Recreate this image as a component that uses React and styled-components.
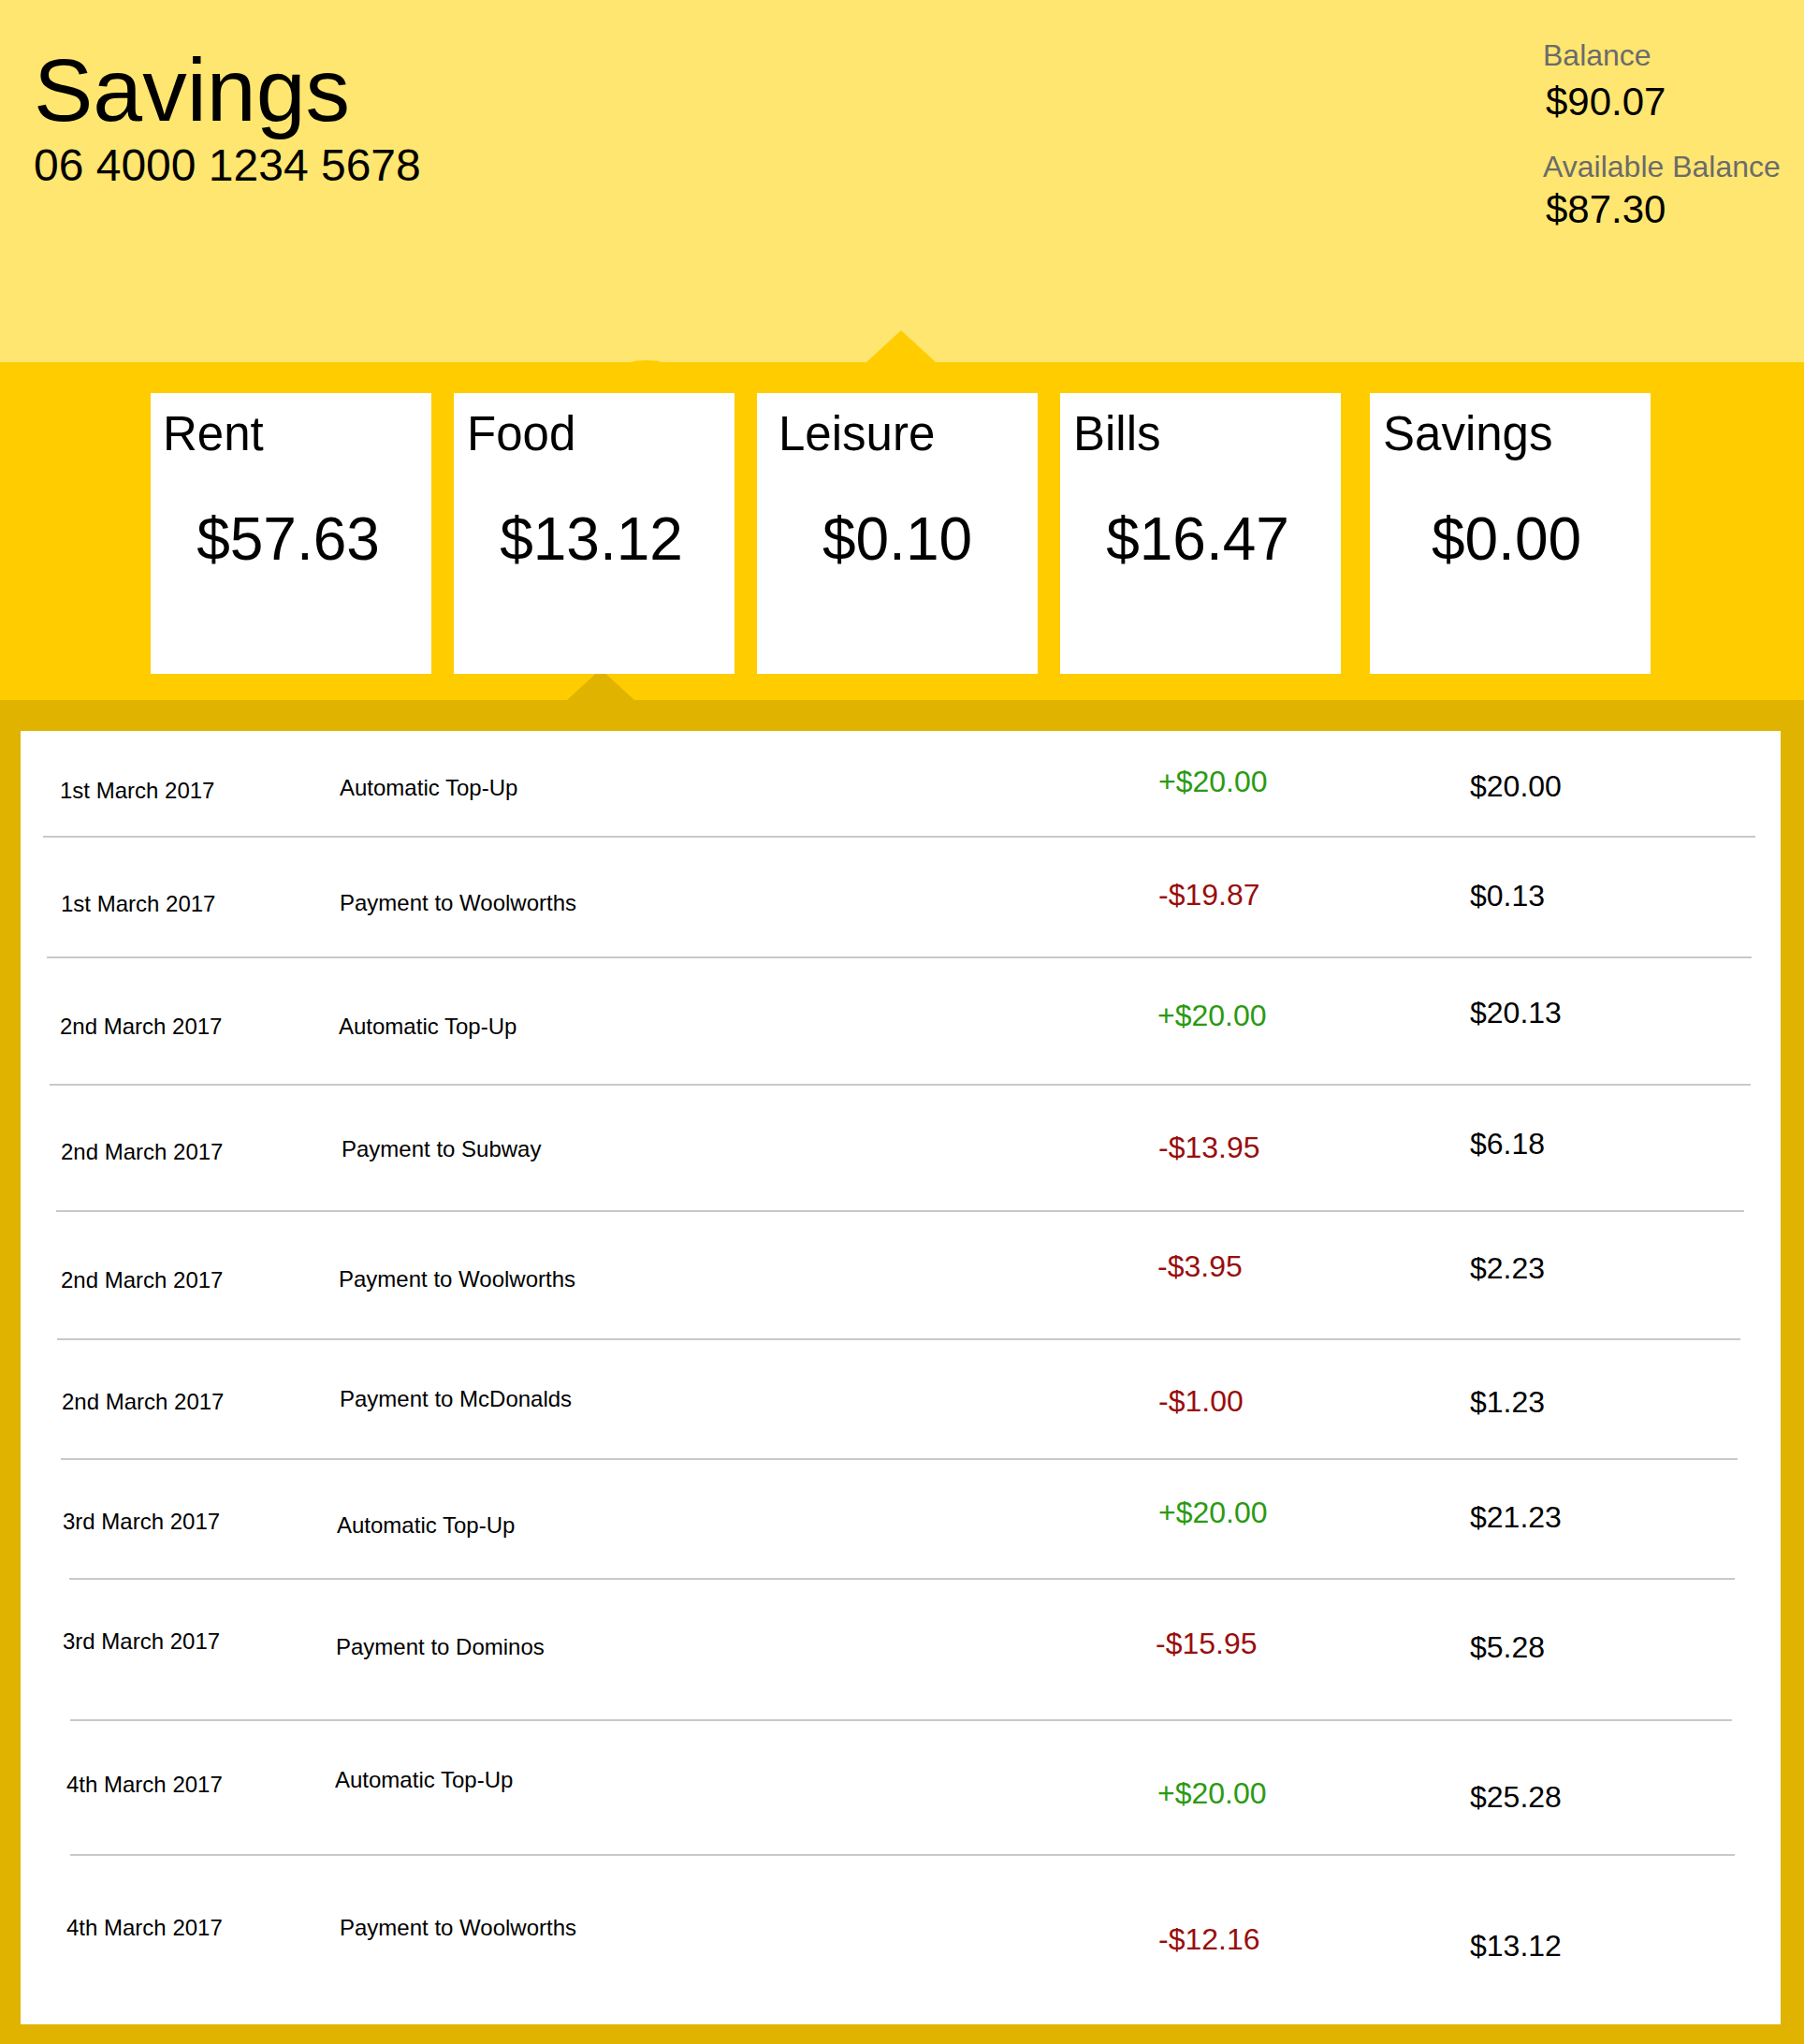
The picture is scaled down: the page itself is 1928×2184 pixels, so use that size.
import React from "react";
import styled, { createGlobalStyle } from "styled-components";

const GlobalStyle = createGlobalStyle`
  html, body { margin: 0; padding: 0; }
  body {
    width: 1928px;
    font-family: "Liberation Sans", Arial, Helvetica, sans-serif;
    color: #000;
  }
`;

const Page = styled.div`
  width: 1928px;
  display: flex;
  flex-direction: column;
`;

const Header = styled.header`
  height: 387px;
  background: #ffe670;
  display: grid;
  grid-template-columns: 1fr 279px;
  box-sizing: border-box;
  padding-left: 36px;
`;

const TitleBlock = styled.div`
  display: flex;
  flex-direction: column;
  padding-top: 49px;
`;

const Title = styled.h1`
  margin: 0;
  font-weight: 400;
  font-size: 95px;
  line-height: 1;
`;

const AccountNo = styled.div`
  margin-top: 9px;
  font-size: 48px;
  line-height: 1;
`;

const BalanceBlock = styled.div`
  display: flex;
  flex-direction: column;
  padding-top: 43px;
`;

const BalanceLabel = styled.div`
  font-size: 32px;
  line-height: 1;
  color: #6b6b6b;
  margin-top: ${(p) => p.$gap || 0}px;
`;

const BalanceValue = styled.div`
  font-size: 42px;
  line-height: 1;
  padding-left: 3px;
  margin-top: ${(p) => p.$gap || 0}px;
`;

const Band = styled.section`
  position: relative;
  height: 361px;
  background: #ffcc00;
  box-sizing: border-box;
  padding: 33px 0 0 161px;
  display: flex;
  gap: 24px;
  align-items: flex-start;

  &::before {
    content: "";
    position: absolute;
    left: 926px;
    top: -34px;
    width: 0;
    height: 0;
    border-left: 37px solid transparent;
    border-right: 37px solid transparent;
    border-bottom: 34px solid #ffcc00;
  }

  &::after {
    content: "";
    position: absolute;
    left: 676px;
    top: -2px;
    width: 30px;
    height: 4px;
    border-radius: 50%;
    background: #ffcc00;
  }
`;

const Card = styled.div`
  position: relative;
  z-index: 1;
  width: 300px;
  height: 300px;
  background: #fff;
  box-sizing: border-box;
  margin-left: ${(p) => p.$shift || 0}px;
  display: flex;
  flex-direction: column;
`;

const CardLabel = styled.div`
  font-size: 51px;
  line-height: 1;
  padding: 18px 0 0 ${(p) => p.$indent}px;
`;

const CardAmount = styled.div`
  font-size: 64px;
  line-height: 1;
  margin-top: 55px;
  text-align: center;
  padding-right: ${(p) => 6 - (p.$nudge || 0)}px;
`;

const Frame = styled.section`
  position: relative;
  background: #e0b300;
  box-sizing: border-box;
  padding: 33px 25px 21px 22px;

  &::before {
    content: "";
    position: absolute;
    left: 606px;
    top: -33px;
    width: 0;
    height: 0;
    border-left: 36px solid transparent;
    border-right: 36px solid transparent;
    border-bottom: 33px solid #e0b300;
  }
`;

const Panel = styled.div`
  background: #fff;
  display: flex;
  flex-direction: column;
`;

const Row = styled.div`
  height: ${(p) => p.$h}px;
  display: grid;
  grid-template-columns: 341px 875px 333px 1fr;
  align-items: start;
`;

const Cell = styled.div`
  padding-top: ${(p) => p.$top}px;
  padding-left: ${(p) => p.$indent || 0}px;
  margin-left: ${(p) => p.$nudge || 0}px;
  font-size: 24px;
  line-height: 1;
  white-space: nowrap;
`;

const Money = styled(Cell)`
  font-size: 32px;
  color: ${(p) =>
    p.$tone === "in" ? "#2b9a12" : p.$tone === "out" ? "#990d0d" : "#000"};
`;

const Divider = styled.div`
  height: 2px;
  background: #c9c9c9;
  margin: 0 ${(p) => p.$right}px 0 ${(p) => p.$left}px;
`;

const cards = [
  { label: "Rent", amount: "$57.63", indent: 13 },
  { label: "Food", amount: "$13.12", indent: 14 },
  { label: "Leisure", amount: "$0.10", indent: 23, nudge: 10 },
  { label: "Bills", amount: "$16.47", indent: 14 },
  { label: "Savings", amount: "$0.00", indent: 14, shift: 7, nudge: -2 },
];

const rows = [
  { date: "1st March 2017", desc: "Automatic Top-Up", amt: "+$20.00", bal: "$20.00", h: 112, t: [52, 49, 38, 43], di: 42, dn: 0, an: 0 },
  { date: "1st March 2017", desc: "Payment to Woolworths", amt: "-$19.87", bal: "$0.13", h: 127, t: [59, 58, 45, 46], di: 43, dn: 0, an: 0 },
  { date: "2nd March 2017", desc: "Automatic Top-Up", amt: "+$20.00", bal: "$20.13", h: 134, t: [61, 61, 45, 42], di: 42, dn: -1, an: -1 },
  { date: "2nd March 2017", desc: "Payment to Subway", amt: "-$13.95", bal: "$6.18", h: 133, t: [59, 56, 50, 46], di: 43, dn: 2, an: 0 },
  { date: "2nd March 2017", desc: "Payment to Woolworths", amt: "-$3.95", bal: "$2.23", h: 135, t: [61, 60, 42, 44], di: 43, dn: -1, an: -1 },
  { date: "2nd March 2017", desc: "Payment to McDonalds", amt: "-$1.00", bal: "$1.23", h: 126, t: [54, 51, 49, 50], di: 44, dn: 0, an: 0 },
  { date: "3rd March 2017", desc: "Automatic Top-Up", amt: "+$20.00", bal: "$21.23", h: 126, t: [54, 58, 40, 45], di: 45, dn: -3, an: 0 },
  { date: "3rd March 2017", desc: "Payment to Dominos", amt: "-$15.95", bal: "$5.28", h: 149, t: [54, 60, 52, 56], di: 45, dn: -4, an: -3 },
  { date: "4th March 2017", desc: "Automatic Top-Up", amt: "+$20.00", bal: "$25.28", h: 142, t: [56, 51, 61, 65], di: 49, dn: -5, an: -1 },
  { date: "4th March 2017", desc: "Payment to Woolworths", amt: "-$12.16", bal: "$13.12", h: 180, t: [65, 65, 73, 80], di: 49, dn: 0, an: 0 },
];

const dividers = [
  [24, 27], [28, 31], [31, 32], [38, 39], [39, 43], [43, 46], [52, 49], [53, 52], [53, 49],
];

export default function App() {
  return (
    <Page>
      <GlobalStyle />
      <Header>
        <TitleBlock>
          <Title>Savings</Title>
          <AccountNo>06 4000 1234 5678</AccountNo>
        </TitleBlock>
        <BalanceBlock>
          <BalanceLabel>Balance</BalanceLabel>
          <BalanceValue $gap={13}>$90.07</BalanceValue>
          <BalanceLabel $gap={32}>Available Balance</BalanceLabel>
          <BalanceValue $gap={9}>$87.30</BalanceValue>
        </BalanceBlock>
      </Header>

      <Band>
        {cards.map((c) => (
          <Card key={c.label} $shift={c.shift}>
            <CardLabel $indent={c.indent}>{c.label}</CardLabel>
            <CardAmount $nudge={c.nudge}>{c.amount}</CardAmount>
          </Card>
        ))}
      </Band>

      <Frame>
        <Panel>
          {rows.map((r, i) => (
            <React.Fragment key={i}>
              <Row $h={r.h}>
                <Cell $top={r.t[0]} $indent={r.di}>{r.date}</Cell>
                <Cell $top={r.t[1]} $nudge={r.dn}>{r.desc}</Cell>
                <Money $top={r.t[2]} $nudge={r.an} $tone={r.amt.startsWith("+") ? "in" : "out"}>
                  {r.amt}
                </Money>
                <Money $top={r.t[3]}>{r.bal}</Money>
              </Row>
              {dividers[i] && <Divider $left={dividers[i][0]} $right={dividers[i][1]} />}
            </React.Fragment>
          ))}
        </Panel>
      </Frame>
    </Page>
  );
}
